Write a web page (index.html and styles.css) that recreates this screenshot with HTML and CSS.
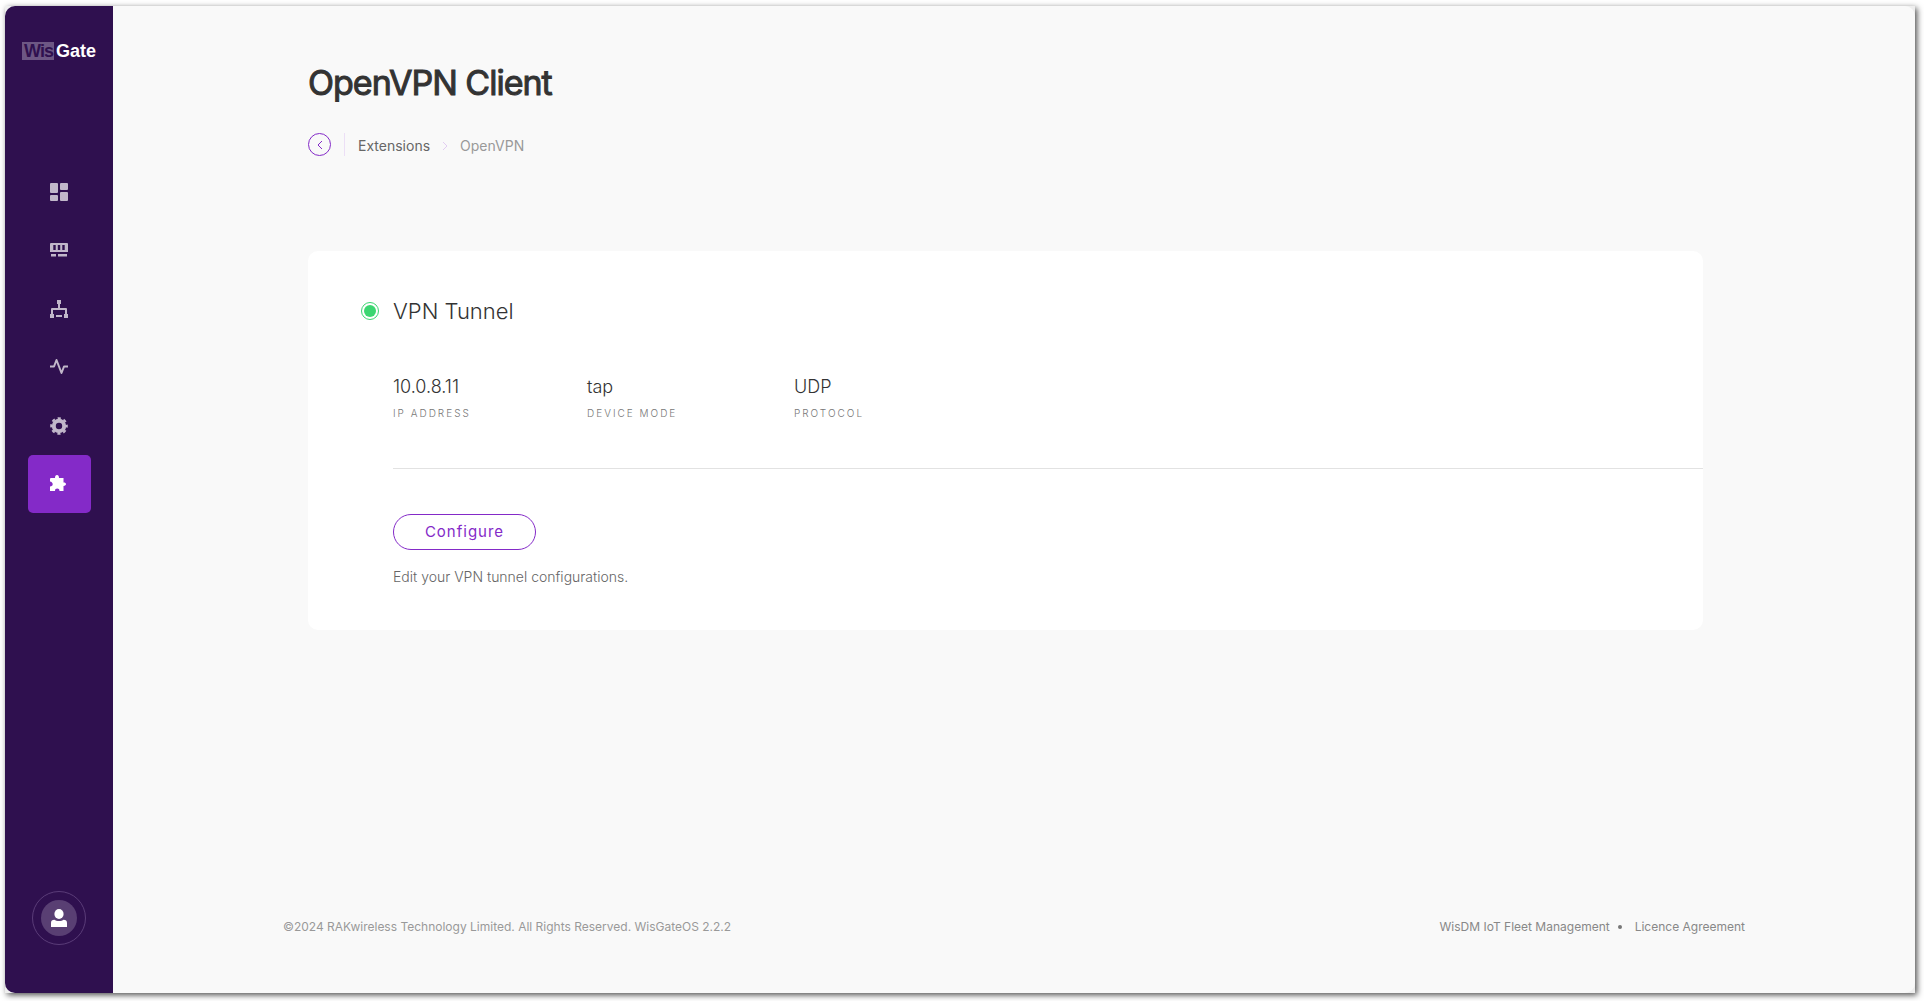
FILE: index.html
```html
<!DOCTYPE html>
<html lang="en">
<head>
<meta charset="utf-8">
<meta name="viewport" content="width=device-width, initial-scale=1">
<title>OpenVPN Client</title>
<link rel="stylesheet" href="styles.css">
</head>
<body>
<div class="frame">
<div class="app">
  <aside class="sidebar">
    <a class="logo" href="#" aria-label="WisGate"><span class="logo-wis">Wis</span><span class="logo-gate">Gate</span></a>
    <nav class="nav">
      <a class="nav-item" href="#" aria-label="Dashboard">
        <svg class="icon" viewBox="0 0 18 18"><rect x="0" y="0" width="8" height="10" rx="1"/><rect x="10" y="0" width="8" height="7" rx="1"/><rect x="0" y="12" width="8" height="6" rx="1"/><rect x="10" y="9" width="8" height="9" rx="1"/></svg>
      </a>
      <a class="nav-item" href="#" aria-label="LoRa">
        <svg class="icon" viewBox="0 0 18 18"><path fill-rule="evenodd" d="M1 2h16a1 1 0 0 1 1 1v8H0V3a1 1 0 0 1 1-1zM3.300 4v5h2.400V4zM7.800 4v5h2.400V4zM12.300 4v5h2.400V4zM1 13h5v2.500H1zM8 13h9v2.500H8z"/></svg>
      </a>
      <a class="nav-item" href="#" aria-label="Network">
        <svg class="icon" viewBox="0 0 18 18"><path d="M7 0h4v4H7zM0 14h4v4H0zM14 14h4v4h-4zM6 15h6v2H6z"/><path class="stroke" d="M9 4v5M2 14V9h14v5"/></svg>
      </a>
      <a class="nav-item" href="#" aria-label="Diagnostics">
        <svg class="icon" viewBox="0 0 18 18"><path class="stroke" d="M0 8.500h4L6.500 2l5 13L14 8.500h4"/></svg>
      </a>
      <a class="nav-item" href="#" aria-label="Settings">
        <svg class="icon" viewBox="0 0 18 18"><circle class="gear-ring" cx="9" cy="9" r="5.200"/><circle class="gear-teeth" cx="9" cy="9" r="7.800"/></svg>
      </a>
      <a class="nav-item nav-item-active" href="#" aria-label="Extensions" aria-current="page">
        <svg class="icon" viewBox="0 0 18 18"><path d="M1 3h4c0-1.800.7-3 2-3s2 1.200 2 3h4.500v4.500c1.700 0 2.500.6 2.500 1.500s-.8 2-2.500 2V16H9.500c0-1.600-1-2.400-2.300-2.400S5 14.400 5 16H0v-4.500c1.700 0 2.700-.9 2.700-2.200S1.700 6.500 0 6.500V4a1 1 0 0 1 1-1z"/></svg>
      </a>
    </nav>
    <button class="avatar" type="button" aria-label="Account">
      <span class="avatar-disc"><svg class="icon" viewBox="0 0 18 18"><ellipse cx="9" cy="5" rx="4.600" ry="5"/><path d="M1 18v-4c0-2 1.200-3.200 3.500-3.200C6 12.500 12 12.500 13.500 10.800 15.800 10.800 17 12 17 14v4z"/></svg></span>
    </button>
  </aside>
  <div class="page">
    <main class="content">
      <h1 class="title">OpenVPN Client</h1>
      <div class="crumbs">
        <a class="back" href="#" aria-label="Back"><svg class="back-arrow" viewBox="0 0 6 10"><path d="M5 1L1 5l4 4"/></svg></a>
        <nav class="trail" aria-label="Breadcrumb">
          <a class="crumb" href="#">Extensions</a>
          <svg class="crumb-arrow" viewBox="0 0 6 10"><path d="M1 1l4 4-4 4"/></svg>
          <span class="crumb-here">OpenVPN</span>
        </nav>
      </div>
      <section class="card">
        <header class="card-head"><span class="status"></span><h2 class="card-title">VPN Tunnel</h2></header>
        <div class="card-body">
          <dl class="facts">
            <div class="fact"><dd class="fact-value">10.0.8.11</dd><dt class="fact-label">IP ADDRESS</dt></div>
            <div class="fact"><dd class="fact-value">tap</dd><dt class="fact-label">DEVICE MODE</dt></div>
            <div class="fact"><dd class="fact-value">UDP</dd><dt class="fact-label">PROTOCOL</dt></div>
          </dl>
          <div class="actions">
            <button class="configure" type="button">Configure</button>
            <p class="hint">Edit your VPN tunnel configurations.</p>
          </div>
        </div>
      </section>
    </main>
    <footer class="footer">
      <span>©2024 RAKwireless Technology Limited. All Rights Reserved. WisGateOS 2.2.2</span>
      <span class="footer-links"><a class="footer-link" href="#">WisDM IoT Fleet Management</a><span class="dot"></span><a class="footer-link" href="#">Licence Agreement</a></span>
    </footer>
  </div>
</div>
</div>
</body>
</html>
```
FILE: styles.css
```css
* { box-sizing: border-box; }

body {
  display: flex;
  min-height: 100vh;
  margin: 0;
  padding: 6px 9px 8px 5px;
  background: #fff;
  color: #333;
  font-family: Inter, "Liberation Sans", sans-serif;
  font-size: 14px;
  line-height: 20px;
}

h1, h2, p, dl, dd { margin: 0; font-weight: 400; }
a { color: inherit; text-decoration: none; }
button { padding: 0; background: none; font: inherit; cursor: pointer; }

.frame {
  display: flex;
  flex: 1;
  background: #eee;
  box-shadow: 2px 2px 6px rgba(0, 0, 0, .7);
}

.app {
  display: flex;
  flex: 1;
  overflow: hidden;
  border-radius: 10px;
  background: #f9f9f9;
}

/* Sidebar */
.sidebar {
  display: flex;
  flex: none;
  flex-direction: column;
  align-items: center;
  width: 108px;
  padding: 36px 0 48px;
  background: #2f104f;
}

.logo {
  display: flex;
  gap: 2px;
  font-family: "Liberation Sans", Arial, sans-serif;
  font-size: 18px;
  font-weight: 700;
  line-height: 18px;
}
.logo-wis { padding: 0 1px 0 2px; background: #6d5784; color: #2f104f; letter-spacing: -1px; }
.logo-gate { color: #fff; }

.nav {
  display: flex;
  flex-direction: column;
  justify-content: space-between;
  height: 350px;
  margin-top: 103px;
}
.nav-item {
  display: flex;
  align-items: center;
  justify-content: center;
  width: 63px;
  height: 58px;
  border-radius: 5px;
  color: #c1b7ca;
}
.nav-item-active { background: #842ac8; color: #fff; }
.icon { width: 18px; height: 18px; fill: currentColor; }
.stroke { fill: none; stroke: currentColor; stroke-width: 2; stroke-linejoin: round; }
.gear-ring { fill: none; stroke: currentColor; stroke-width: 4; }
.gear-teeth { fill: none; stroke: currentColor; stroke-width: 2; stroke-dasharray: 3.2 2.926; stroke-dashoffset: 1.6; }

.avatar {
  display: flex;
  align-items: center;
  justify-content: center;
  width: 54px;
  height: 54px;
  margin-top: auto;
  border: 1px solid #5a3c78;
  border-radius: 50%;
  color: #fff;
}
.avatar-disc {
  display: flex;
  align-items: center;
  justify-content: center;
  width: 36px;
  height: 36px;
  border-radius: 50%;
  background: #593f73;
}

/* Page */
.page { display: flex; flex: 1; flex-direction: column; }
.content { padding: 56px 212px 0 195px; }
.title { font-size: 34px; line-height: 42px; letter-spacing: -1px; -webkit-text-stroke: 1px #333; }

.crumbs { display: flex; align-items: center; margin-top: 29px; }
.back {
  display: flex;
  align-items: center;
  justify-content: center;
  width: 23px;
  height: 23px;
  border: 1px solid #842ac8;
  border-radius: 50%;
}
.back-arrow, .crumb-arrow { width: 6px; height: 10px; fill: none; stroke: #842ac8; }
.crumb-arrow { stroke: #e2cdf2; }
.trail {
  display: flex;
  align-items: center;
  gap: 12px;
  margin-left: 13px;
  padding: 3px 0 0 13px;
  border-left: 1px solid #ecdff6;
}
.crumb { color: #666; }
.crumb-here { color: #999; }

/* Card */
.card {
  margin-top: 95px;
  padding: 46px 0 43px 53px;
  border-radius: 10px;
  background: #fff;
}
.card-head { display: flex; align-items: center; gap: 14px; }
.status {
  width: 18px;
  height: 18px;
  padding: 2px;
  border: 1px solid #3bd671;
  border-radius: 50%;
  background: #3bd671 content-box;
}
.card-title { font-size: 22px; font-weight: 300; line-height: 28px; }
.card-body { padding-left: 32px; }
.facts {
  display: grid;
  grid-template-columns: 194px 207px 1fr;
  padding: 50px 0 47px;
  border-bottom: 1px solid #e2e2e2;
}
.fact-value { font-size: 18px; font-weight: 300; line-height: 24px; }
.fact-label { margin-top: 6px; color: #777; font-size: 10px; font-weight: 300; line-height: 16px; letter-spacing: 2px; }
.actions { padding-top: 45px; }
.configure {
  width: 143px;
  height: 36px;
  border: 1px solid #842ac8;
  border-radius: 18px;
  color: #842ac8;
  font-size: 15px;
  letter-spacing: 1px;
}
.hint { margin-top: 17px; color: #666; font-weight: 300; }

/* Footer */
.footer {
  display: flex;
  justify-content: space-between;
  margin-top: auto;
  padding: 0 170px 56px;
  color: #999;
  font-size: 12px;
}
.footer-links { display: flex; align-items: center; color: #888; }
.dot { width: 4px; height: 4px; margin: 0 13px 0 8px; border-radius: 50%; background: #777; }
```
